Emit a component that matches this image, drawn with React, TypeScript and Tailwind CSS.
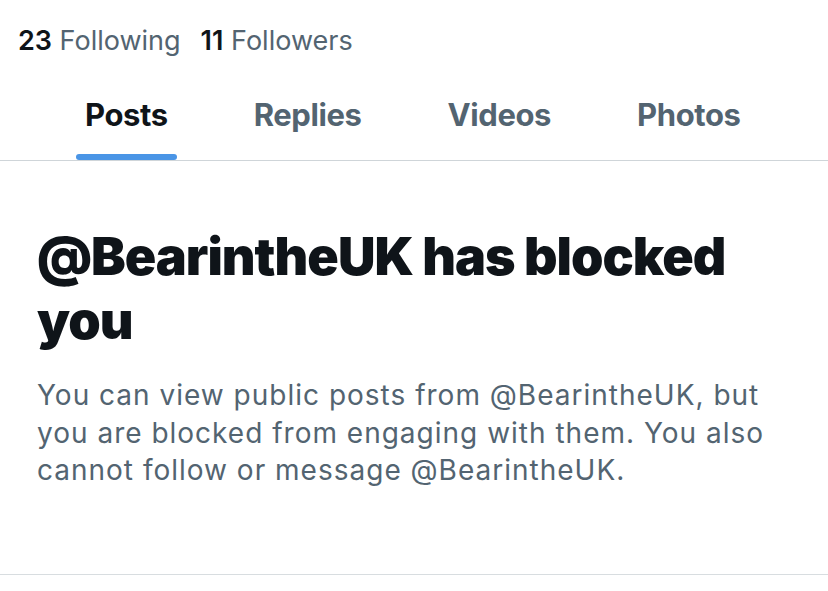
import React from 'react';

const TABS = ['Posts', 'Replies', 'Videos', 'Photos'];

export default function App() {
  const active = 'Posts';

  return (
    <div
      className="w-[828px] h-[591px] bg-white overflow-hidden"
      style={{ fontFamily: 'Inter, "Noto Sans", sans-serif' }}
    >
      {/* follow counts */}
      <div className="flex items-center gap-[20px] pl-[18px] pt-[25px] text-[27px] leading-[32px]">
        <span>
          <span className="font-semibold text-[#0f1419]">23</span>{' '}
          <span className="text-[#536471]">Following</span>
        </span>
        <span>
          <span className="font-semibold text-[#0f1419]">11</span>{' '}
          <span className="text-[#536471]">Followers</span>
        </span>
      </div>

      {/* tabs */}
      <div className="mt-[40px] flex items-start pl-[42px] border-b border-[#cfd5d9]">
        {TABS.map((t) => (
          <div key={t} className="flex flex-col px-[43px]">
            <span
              className={`text-[31px] leading-[36px] font-bold tracking-[-0.4px] ${
                t === active ? 'text-[#0f1419]' : 'text-[#536471]'
              }`}
            >
              {t}
            </span>
            <div
              className={`mt-[21px] -mx-[9px] h-[6px] rounded-full ${
                t === active ? 'bg-[#4a95e6]' : 'bg-transparent'
              }`}
            />
          </div>
        ))}
      </div>

      {/* blocked notice */}
      <div className="px-[37px] pt-[64px] pb-[84px] border-b border-[#d8dde0]">
        <h1 className="text-[52px] leading-[64px] font-black text-[#0f1419] tracking-[-1px]">
          @BearintheUK has blocked you
        </h1>
        <p className="mt-[24px] text-[28px] leading-[37.5px] text-[#536471] tracking-[1px]">
          You can view public posts from @BearintheUK, but you are blocked from engaging with them. You also
          cannot follow or message @BearintheUK.
        </p>
      </div>
    </div>
  );
}
